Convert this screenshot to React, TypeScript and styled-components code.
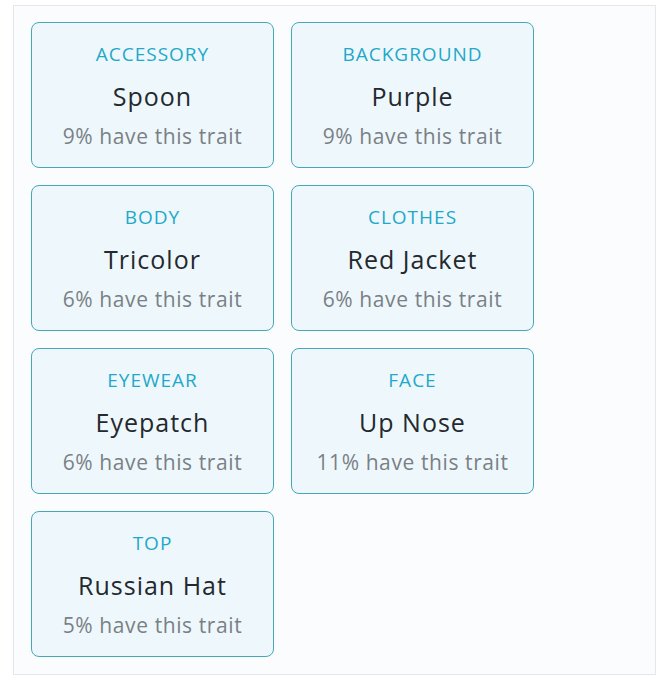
import React from "react";
import styled, { createGlobalStyle } from "styled-components";

const Global = createGlobalStyle`
  html, body { margin: 0; padding: 0; background: #ffffff; }
  body { font-family: "Open Sans", Lato, "Liberation Sans", sans-serif; }
`;

const Page = styled.div`
  padding: 5px 0 0 13px;
  width: 668px;
  height: 680px;
  box-sizing: border-box;
`;

const Panel = styled.section`
  width: 643px;
  height: 670px;
  box-sizing: border-box;
  background: #fbfcfe;
  border: 1px solid #e3e6ea;
  padding: 16px 17px;
`;

const Grid = styled.div`
  display: grid;
  grid-template-columns: repeat(2, 243px);
  grid-auto-rows: 146px;
  gap: 17px;
`;

const Card = styled.div`
  box-sizing: border-box;
  border: 1.5px solid #44a8b9;
  border-radius: 8px;
  background: #eef8fc;
  display: flex;
  flex-direction: column;
  align-items: center;
  padding-top: 18px;
`;

const Category = styled.div`
  color: #1fa8c9;
  font-size: 19px;
  line-height: 26px;
  letter-spacing: 1px;
  text-transform: uppercase;
`;

const Value = styled.div`
  color: #24292e;
  font-size: 25px;
  line-height: 32px;
  letter-spacing: 1px;
  margin-top: 13px;
`;

const Share = styled.div`
  color: #7a8085;
  font-size: 21px;
  line-height: 28px;
  letter-spacing: 0.6px;
  margin-top: 10px;
`;

const traits = [
  { type: "Accessory", value: "Spoon", pct: 9 },
  { type: "Background", value: "Purple", pct: 9 },
  { type: "Body", value: "Tricolor", pct: 6 },
  { type: "Clothes", value: "Red Jacket", pct: 6 },
  { type: "Eyewear", value: "Eyepatch", pct: 6 },
  { type: "Face", value: "Up Nose", pct: 11 },
  { type: "Top", value: "Russian Hat", pct: 5 },
];

export default function App() {
  return (
    <>
      <Global />
      <Page>
        <Panel>
          <Grid>
            {traits.map((t) => (
              <Card key={t.type}>
                <Category>{t.type}</Category>
                <Value>{t.value}</Value>
                <Share>{t.pct}% have this trait</Share>
              </Card>
            ))}
          </Grid>
        </Panel>
      </Page>
    </>
  );
}
